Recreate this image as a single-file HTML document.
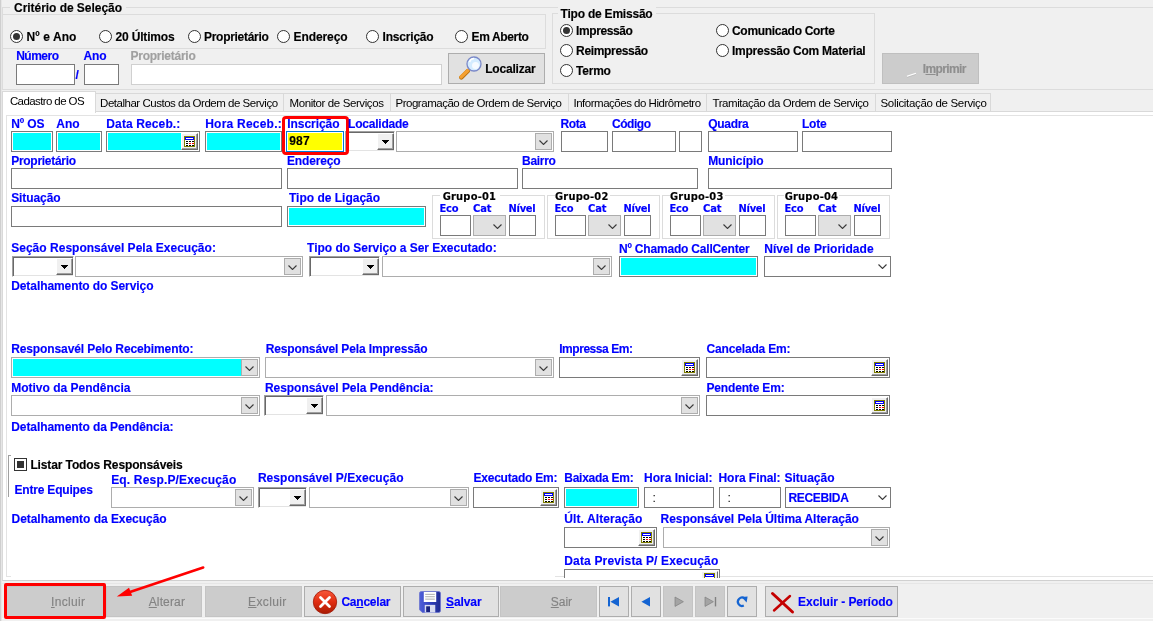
<!DOCTYPE html>
<html><head><meta charset="utf-8"><title>Ordem de Serviço</title>
<style>
html,body{margin:0;padding:0}
body{width:1153px;height:621px;overflow:hidden;background:#f0f0f0;position:relative;font-family:"Liberation Sans",sans-serif}
div,span{position:absolute;box-sizing:border-box}
span{white-space:pre}
#t{left:0;top:0;width:1153px;height:621px;will-change:transform}
#t .b{-webkit-text-stroke:0.15px currentColor}
u{text-decoration:underline}
</style></head><body>
<div style="left:2px;top:7px;width:1158px;height:83px;border:1px solid #dcdcdc;box-sizing:border-box;"></div>
<div style="left:10px;top:0px;width:116px;height:16px;background:#f0f0f0;"></div>
<div style="left:3px;top:14px;width:543px;height:35px;border:1px solid #dcdcdc;border-left:none;box-sizing:border-box;"></div>
<div style="left:10.0px;top:30.0px;width:13.0px;height:13.0px;box-sizing:border-box;border:1px solid #333;border-radius:50%;background:#fff;"><div style="left:2px;top:2px;width:7px;height:7px;border-radius:50%;background:#333"></div></div>
<div style="left:99.0px;top:30.0px;width:13.0px;height:13.0px;box-sizing:border-box;border:1px solid #333;border-radius:50%;background:#fff;"></div>
<div style="left:188.0px;top:30.0px;width:13.0px;height:13.0px;box-sizing:border-box;border:1px solid #333;border-radius:50%;background:#fff;"></div>
<div style="left:277.0px;top:30.0px;width:13.0px;height:13.0px;box-sizing:border-box;border:1px solid #333;border-radius:50%;background:#fff;"></div>
<div style="left:366.0px;top:30.0px;width:13.0px;height:13.0px;box-sizing:border-box;border:1px solid #333;border-radius:50%;background:#fff;"></div>
<div style="left:455.0px;top:30.0px;width:13.0px;height:13.0px;box-sizing:border-box;border:1px solid #333;border-radius:50%;background:#fff;"></div>
<div style="left:16px;top:64px;width:59px;height:21px;border:1px solid #7a7a7a;background:#fff;box-shadow:inset 0 0 0 1px #fff;"></div>
<div style="left:84px;top:64px;width:35px;height:21px;border:1px solid #7a7a7a;background:#fff;box-shadow:inset 0 0 0 1px #fff;"></div>
<div style="left:131px;top:64px;width:311px;height:21px;border:1px solid #d0d0d0;background:#fff;box-sizing:border-box;"></div>
<div style="left:448px;top:53px;width:97px;height:31px;border:1px solid #adadad;background:#e1e1e1;box-sizing:border-box;"><svg width="26" height="28" viewBox="0 0 26 28" style="position:absolute;left:9.5px;top:0px"><path d="M2.3 23.5 L8.8 17" stroke="#b87010" stroke-width="4.4" stroke-linecap="round"/><path d="M2 23 L8.8 16.5" stroke="#f4a030" stroke-width="3.2" stroke-linecap="round"/><circle cx="15" cy="10" r="7" fill="#d4ecff" stroke="#7a88c8" stroke-width="1.3"/><circle cx="16.5" cy="11.5" r="3.5" fill="#fff" opacity="0.8"/><path d="M10.5 8 A5 5 0 0 1 15 4.5" stroke="#fff" stroke-width="1.5" fill="none"/></svg></div>
<div style="left:552px;top:13px;width:323px;height:71px;border:1px solid #dcdcdc;box-sizing:border-box;"></div>
<div style="left:558px;top:5px;width:98px;height:15px;background:#f0f0f0;"></div>
<div style="left:560.0px;top:24.0px;width:13.0px;height:13.0px;box-sizing:border-box;border:1px solid #333;border-radius:50%;background:#fff;"><div style="left:2px;top:2px;width:7px;height:7px;border-radius:50%;background:#333"></div></div>
<div style="left:560.0px;top:44.0px;width:13.0px;height:13.0px;box-sizing:border-box;border:1px solid #333;border-radius:50%;background:#fff;"></div>
<div style="left:560.0px;top:64.0px;width:13.0px;height:13.0px;box-sizing:border-box;border:1px solid #333;border-radius:50%;background:#fff;"></div>
<div style="left:716.0px;top:24.0px;width:13.0px;height:13.0px;box-sizing:border-box;border:1px solid #333;border-radius:50%;background:#fff;"></div>
<div style="left:716.0px;top:44.0px;width:13.0px;height:13.0px;box-sizing:border-box;border:1px solid #333;border-radius:50%;background:#fff;"></div>
<div style="left:882px;top:53px;width:97px;height:31px;background:#cccccc;border:1px solid #bfbfbf;box-sizing:border-box;"></div>
<svg width="12" height="6" viewBox="0 0 12 6" style="position:absolute;left:906px;top:72px"><path d="M1 4.5L10 1.5" stroke="#fff" stroke-width="1.4"/><path d="M1 5.3L10 2.3" stroke="#a8a8a8" stroke-width="0.6"/></svg>
<div style="left:2px;top:111px;width:1151px;height:470px;background:#fff;border:1px solid #d9d9d9;border-right:none;border-bottom-color:#d0d0d0;box-sizing:border-box;"></div>
<div style="left:6px;top:115px;width:1147px;height:462px;border:1px solid #e3e3e3;border-right:none;box-sizing:border-box;"></div>
<div style="left:11px;top:575px;width:544px;height:3px;background:#fff;"></div>
<div style="left:95px;top:93px;width:189px;height:18px;border:1px solid #d9d9d9;border-bottom:none;background:#f0f0f0;box-sizing:border-box;"></div>
<div style="left:283px;top:93px;width:108px;height:18px;border:1px solid #d9d9d9;border-bottom:none;background:#f0f0f0;box-sizing:border-box;"></div>
<div style="left:390px;top:93px;width:179px;height:18px;border:1px solid #d9d9d9;border-bottom:none;background:#f0f0f0;box-sizing:border-box;"></div>
<div style="left:568px;top:93px;width:139px;height:18px;border:1px solid #d9d9d9;border-bottom:none;background:#f0f0f0;box-sizing:border-box;"></div>
<div style="left:706px;top:93px;width:170px;height:18px;border:1px solid #d9d9d9;border-bottom:none;background:#f0f0f0;box-sizing:border-box;"></div>
<div style="left:875px;top:93px;width:116px;height:18px;border:1px solid #d9d9d9;border-bottom:none;background:#f0f0f0;box-sizing:border-box;"></div>
<div style="left:2px;top:91px;width:94px;height:22px;border:1px solid #d9d9d9;border-bottom:none;background:#fff;box-sizing:border-box;"></div>
<div style="left:11px;top:131px;width:42px;height:21px;border:1px solid #7a7a7a;background:#00ffff;box-shadow:inset 0 0 0 1px #fff;"></div>
<div style="left:56px;top:131px;width:46px;height:21px;border:1px solid #7a7a7a;background:#00ffff;box-shadow:inset 0 0 0 1px #fff;"></div>
<div style="left:106px;top:131px;width:94px;height:21px;border:1px solid #7a7a7a;background:#00ffff;box-shadow:inset 0 0 0 1px #fff;"><div style="right:1px;top:1px;width:17px;height:17px;border:1px solid;border-color:#fff #696969 #696969 #fff;background:#f0f0f0;box-shadow:inset -1px -1px 0 #a0a0a0"><svg width="11" height="11" viewBox="0 0 11 11" shape-rendering="crispEdges" style="position:absolute;left:2px;top:2px"><rect x="0" y="0" width="11" height="11" fill="#808000"/><rect x="1" y="1" width="9" height="9" fill="#fff"/><rect x="1" y="1" width="9" height="3" fill="#0000ff"/><rect x="2" y="2" width="7" height="1" fill="#fff"/><rect x="2" y="5" width="2" height="1" fill="#000"/><rect x="5" y="5" width="2" height="1" fill="#000"/><rect x="8" y="5" width="2" height="1" fill="#000"/><rect x="2" y="7" width="2" height="1" fill="#000"/><rect x="5" y="7" width="2" height="1" fill="#f00"/><rect x="8" y="7" width="2" height="1" fill="#f00"/><rect x="2" y="9" width="2" height="1" fill="#000"/><rect x="5" y="9" width="2" height="1" fill="#000"/><rect x="8" y="9" width="2" height="1" fill="#000"/></svg></div></div>
<div style="left:205px;top:131px;width:77px;height:21px;border:1px solid #7a7a7a;background:#00ffff;box-shadow:inset 0 0 0 1px #fff;"></div>
<div style="left:286px;top:131px;width:58px;height:21px;border:1px solid #0078d7;background:#ffff00;box-sizing:border-box;box-shadow:inset 0 0 0 1px #fff;"></div>
<div style="left:345px;top:131px;width:50px;height:21px;border:1px solid;border-color:#a0a0a0 #fff #fff #a0a0a0;background:#fff;box-shadow:inset 1px 1px 0 #696969,inset -1px -1px 0 #e3e3e3;"><div style="right:0px;top:1px;width:17px;height:17px;background:#f0f0f0;border:1px solid;border-color:#fff #696969 #696969 #fff;box-shadow:inset -1px -1px 0 #a0a0a0"><svg width="7" height="4" viewBox="0 0 7 4" shape-rendering="crispEdges" style="position:absolute;left:4px;top:6px"><path d="M0 0H7V1H0ZM1 1H6V2H1ZM2 2H5V3H2ZM3 3H4V4H3Z" fill="#000"/></svg></div></div>
<div style="left:396px;top:131px;width:158px;height:21px;border:1px solid #adadad;background:#fff;"><div style="right:1px;top:1px;width:17px;height:17px;border:1px solid #adadad;background:#e1e1e1"></div><svg width="9" height="5" viewBox="0 0 9 5" style="position:absolute;left:142px;top:8px"><path d="M0.5 0.5 L4.5 4.5 L8.5 0.5" fill="none" stroke="#3a3a3a" stroke-width="1.1"/></svg></div>
<div style="left:561px;top:131px;width:47px;height:21px;border:1px solid #7a7a7a;background:#fff;box-shadow:inset 0 0 0 1px #fff;"></div>
<div style="left:612px;top:131px;width:64px;height:21px;border:1px solid #7a7a7a;background:#fff;box-shadow:inset 0 0 0 1px #fff;"></div>
<div style="left:679px;top:131px;width:23px;height:21px;border:1px solid #7a7a7a;background:#fff;box-shadow:inset 0 0 0 1px #fff;"></div>
<div style="left:708px;top:131px;width:90px;height:21px;border:1px solid #7a7a7a;background:#fff;box-shadow:inset 0 0 0 1px #fff;"></div>
<div style="left:802px;top:131px;width:90px;height:21px;border:1px solid #7a7a7a;background:#fff;box-shadow:inset 0 0 0 1px #fff;"></div>
<div style="left:282px;top:116px;width:67px;height:39px;border:3px solid #ff0000;border-radius:4px;box-sizing:border-box;"></div>
<div style="left:11px;top:168px;width:271px;height:21px;border:1px solid #7a7a7a;background:#fff;box-shadow:inset 0 0 0 1px #fff;"></div>
<div style="left:287px;top:168px;width:231px;height:21px;border:1px solid #7a7a7a;background:#fff;box-shadow:inset 0 0 0 1px #fff;"></div>
<div style="left:522px;top:168px;width:176px;height:21px;border:1px solid #7a7a7a;background:#fff;box-shadow:inset 0 0 0 1px #fff;"></div>
<div style="left:708px;top:168px;width:184px;height:21px;border:1px solid #7a7a7a;background:#fff;box-shadow:inset 0 0 0 1px #fff;"></div>
<div style="left:11px;top:206px;width:271px;height:21px;border:1px solid #7a7a7a;background:#fff;box-shadow:inset 0 0 0 1px #fff;"></div>
<div style="left:287px;top:206px;width:139px;height:21px;border:1px solid #7a7a7a;background:#00ffff;box-shadow:inset 0 0 0 1px #fff;"></div>
<div style="left:432px;top:195px;width:113px;height:44px;border:1px solid #dcdcdc;box-sizing:border-box;"></div>
<div style="left:439.7px;top:190px;width:60.0px;height:13px;background:#fff;"></div>
<div style="left:440px;top:215px;width:31px;height:21px;border:1px solid #7a7a7a;background:#fff;box-sizing:border-box;"></div>
<div style="left:473px;top:215px;width:33px;height:21px;border:1px solid #adadad;background:#e1e1e1;box-sizing:border-box;"><svg width="9" height="5" viewBox="0 0 9 5" style="position:absolute;left:19px;top:7.5px"><path d="M0.5 0.5 L4.5 4.5 L8.5 0.5" fill="none" stroke="#3a3a3a" stroke-width="1.1"/></svg></div>
<div style="left:509px;top:215px;width:27px;height:21px;border:1px solid #7a7a7a;background:#fff;box-sizing:border-box;"></div>
<div style="left:547px;top:195px;width:113px;height:44px;border:1px solid #dcdcdc;box-sizing:border-box;"></div>
<div style="left:554.5px;top:190px;width:55.0px;height:13px;background:#fff;"></div>
<div style="left:555px;top:215px;width:31px;height:21px;border:1px solid #7a7a7a;background:#fff;box-sizing:border-box;"></div>
<div style="left:588px;top:215px;width:33px;height:21px;border:1px solid #adadad;background:#e1e1e1;box-sizing:border-box;"><svg width="9" height="5" viewBox="0 0 9 5" style="position:absolute;left:19px;top:7.5px"><path d="M0.5 0.5 L4.5 4.5 L8.5 0.5" fill="none" stroke="#3a3a3a" stroke-width="1.1"/></svg></div>
<div style="left:624px;top:215px;width:27px;height:21px;border:1px solid #7a7a7a;background:#fff;box-sizing:border-box;"></div>
<div style="left:662px;top:195px;width:113px;height:44px;border:1px solid #dcdcdc;box-sizing:border-box;"></div>
<div style="left:669.5px;top:190px;width:55.0px;height:13px;background:#fff;"></div>
<div style="left:670px;top:215px;width:31px;height:21px;border:1px solid #7a7a7a;background:#fff;box-sizing:border-box;"></div>
<div style="left:703px;top:215px;width:33px;height:21px;border:1px solid #adadad;background:#e1e1e1;box-sizing:border-box;"><svg width="9" height="5" viewBox="0 0 9 5" style="position:absolute;left:19px;top:7.5px"><path d="M0.5 0.5 L4.5 4.5 L8.5 0.5" fill="none" stroke="#3a3a3a" stroke-width="1.1"/></svg></div>
<div style="left:739px;top:215px;width:27px;height:21px;border:1px solid #7a7a7a;background:#fff;box-sizing:border-box;"></div>
<div style="left:777px;top:195px;width:113px;height:44px;border:1px solid #dcdcdc;box-sizing:border-box;"></div>
<div style="left:784.2px;top:190px;width:55.0px;height:13px;background:#fff;"></div>
<div style="left:785px;top:215px;width:31px;height:21px;border:1px solid #7a7a7a;background:#fff;box-sizing:border-box;"></div>
<div style="left:818px;top:215px;width:33px;height:21px;border:1px solid #adadad;background:#e1e1e1;box-sizing:border-box;"><svg width="9" height="5" viewBox="0 0 9 5" style="position:absolute;left:19px;top:7.5px"><path d="M0.5 0.5 L4.5 4.5 L8.5 0.5" fill="none" stroke="#3a3a3a" stroke-width="1.1"/></svg></div>
<div style="left:854px;top:215px;width:27px;height:21px;border:1px solid #7a7a7a;background:#fff;box-sizing:border-box;"></div>
<div style="left:12px;top:256px;width:62px;height:21px;border:1px solid;border-color:#a0a0a0 #fff #fff #a0a0a0;background:#fff;box-shadow:inset 1px 1px 0 #696969,inset -1px -1px 0 #e3e3e3;"><div style="right:0px;top:1px;width:17px;height:17px;background:#f0f0f0;border:1px solid;border-color:#fff #696969 #696969 #fff;box-shadow:inset -1px -1px 0 #a0a0a0"><svg width="7" height="4" viewBox="0 0 7 4" shape-rendering="crispEdges" style="position:absolute;left:4px;top:6px"><path d="M0 0H7V1H0ZM1 1H6V2H1ZM2 2H5V3H2ZM3 3H4V4H3Z" fill="#000"/></svg></div></div>
<div style="left:75px;top:256px;width:228px;height:21px;border:1px solid #adadad;background:#fff;"><div style="right:1px;top:1px;width:17px;height:17px;border:1px solid #adadad;background:#e1e1e1"></div><svg width="9" height="5" viewBox="0 0 9 5" style="position:absolute;left:212px;top:8px"><path d="M0.5 0.5 L4.5 4.5 L8.5 0.5" fill="none" stroke="#3a3a3a" stroke-width="1.1"/></svg></div>
<div style="left:309px;top:256px;width:71px;height:21px;border:1px solid;border-color:#a0a0a0 #fff #fff #a0a0a0;background:#fff;box-shadow:inset 1px 1px 0 #696969,inset -1px -1px 0 #e3e3e3;"><div style="right:0px;top:1px;width:17px;height:17px;background:#f0f0f0;border:1px solid;border-color:#fff #696969 #696969 #fff;box-shadow:inset -1px -1px 0 #a0a0a0"><svg width="7" height="4" viewBox="0 0 7 4" shape-rendering="crispEdges" style="position:absolute;left:4px;top:6px"><path d="M0 0H7V1H0ZM1 1H6V2H1ZM2 2H5V3H2ZM3 3H4V4H3Z" fill="#000"/></svg></div></div>
<div style="left:382px;top:256px;width:230px;height:21px;border:1px solid #adadad;background:#fff;"><div style="right:1px;top:1px;width:17px;height:17px;border:1px solid #adadad;background:#e1e1e1"></div><svg width="9" height="5" viewBox="0 0 9 5" style="position:absolute;left:214px;top:8px"><path d="M0.5 0.5 L4.5 4.5 L8.5 0.5" fill="none" stroke="#3a3a3a" stroke-width="1.1"/></svg></div>
<div style="left:619px;top:256px;width:139px;height:21px;border:1px solid #7a7a7a;background:#00ffff;box-shadow:inset 0 0 0 1px #fff;"></div>
<div style="left:764px;top:256px;width:127px;height:21px;border:1px solid #7a7a7a;background:#fff;"><svg width="9" height="5" viewBox="0 0 9 5" style="position:absolute;left:112.5px;top:7px"><path d="M0.5 0.5 L4.5 4.5 L8.5 0.5" fill="none" stroke="#3a3a3a" stroke-width="1.1"/></svg></div>
<div style="left:11px;top:357px;width:249px;height:21px;border:1px solid #adadad;background:#00ffff;box-shadow:inset 0 0 0 1px #fff;"><div style="right:0;top:0;width:18px;height:19px;background:#fff"></div><div style="right:1px;top:1px;width:17px;height:17px;border:1px solid #adadad;background:#e1e1e1"></div><svg width="9" height="5" viewBox="0 0 9 5" style="position:absolute;left:233px;top:8px"><path d="M0.5 0.5 L4.5 4.5 L8.5 0.5" fill="none" stroke="#3a3a3a" stroke-width="1.1"/></svg></div>
<div style="left:265px;top:357px;width:289px;height:21px;border:1px solid #adadad;background:#fff;"><div style="right:1px;top:1px;width:17px;height:17px;border:1px solid #adadad;background:#e1e1e1"></div><svg width="9" height="5" viewBox="0 0 9 5" style="position:absolute;left:273px;top:8px"><path d="M0.5 0.5 L4.5 4.5 L8.5 0.5" fill="none" stroke="#3a3a3a" stroke-width="1.1"/></svg></div>
<div style="left:559px;top:357px;width:141px;height:21px;border:1px solid #7a7a7a;background:#fff;box-shadow:inset 0 0 0 1px #fff;"><div style="right:1px;top:1px;width:17px;height:17px;border:1px solid;border-color:#fff #696969 #696969 #fff;background:#f0f0f0;box-shadow:inset -1px -1px 0 #a0a0a0"><svg width="11" height="11" viewBox="0 0 11 11" shape-rendering="crispEdges" style="position:absolute;left:2px;top:2px"><rect x="0" y="0" width="11" height="11" fill="#808000"/><rect x="1" y="1" width="9" height="9" fill="#fff"/><rect x="1" y="1" width="9" height="3" fill="#0000ff"/><rect x="2" y="2" width="7" height="1" fill="#fff"/><rect x="2" y="5" width="2" height="1" fill="#000"/><rect x="5" y="5" width="2" height="1" fill="#000"/><rect x="8" y="5" width="2" height="1" fill="#000"/><rect x="2" y="7" width="2" height="1" fill="#000"/><rect x="5" y="7" width="2" height="1" fill="#f00"/><rect x="8" y="7" width="2" height="1" fill="#f00"/><rect x="2" y="9" width="2" height="1" fill="#000"/><rect x="5" y="9" width="2" height="1" fill="#000"/><rect x="8" y="9" width="2" height="1" fill="#000"/></svg></div></div>
<div style="left:706px;top:357px;width:184px;height:21px;border:1px solid #7a7a7a;background:#fff;box-shadow:inset 0 0 0 1px #fff;"><div style="right:1px;top:1px;width:17px;height:17px;border:1px solid;border-color:#fff #696969 #696969 #fff;background:#f0f0f0;box-shadow:inset -1px -1px 0 #a0a0a0"><svg width="11" height="11" viewBox="0 0 11 11" shape-rendering="crispEdges" style="position:absolute;left:2px;top:2px"><rect x="0" y="0" width="11" height="11" fill="#808000"/><rect x="1" y="1" width="9" height="9" fill="#fff"/><rect x="1" y="1" width="9" height="3" fill="#0000ff"/><rect x="2" y="2" width="7" height="1" fill="#fff"/><rect x="2" y="5" width="2" height="1" fill="#000"/><rect x="5" y="5" width="2" height="1" fill="#000"/><rect x="8" y="5" width="2" height="1" fill="#000"/><rect x="2" y="7" width="2" height="1" fill="#000"/><rect x="5" y="7" width="2" height="1" fill="#f00"/><rect x="8" y="7" width="2" height="1" fill="#f00"/><rect x="2" y="9" width="2" height="1" fill="#000"/><rect x="5" y="9" width="2" height="1" fill="#000"/><rect x="8" y="9" width="2" height="1" fill="#000"/></svg></div></div>
<div style="left:11px;top:395px;width:249px;height:21px;border:1px solid #adadad;background:#fff;"><div style="right:1px;top:1px;width:17px;height:17px;border:1px solid #adadad;background:#e1e1e1"></div><svg width="9" height="5" viewBox="0 0 9 5" style="position:absolute;left:233px;top:8px"><path d="M0.5 0.5 L4.5 4.5 L8.5 0.5" fill="none" stroke="#3a3a3a" stroke-width="1.1"/></svg></div>
<div style="left:264px;top:395px;width:60px;height:21px;border:1px solid;border-color:#a0a0a0 #fff #fff #a0a0a0;background:#fff;box-shadow:inset 1px 1px 0 #696969,inset -1px -1px 0 #e3e3e3;"><div style="right:0px;top:1px;width:17px;height:17px;background:#f0f0f0;border:1px solid;border-color:#fff #696969 #696969 #fff;box-shadow:inset -1px -1px 0 #a0a0a0"><svg width="7" height="4" viewBox="0 0 7 4" shape-rendering="crispEdges" style="position:absolute;left:4px;top:6px"><path d="M0 0H7V1H0ZM1 1H6V2H1ZM2 2H5V3H2ZM3 3H4V4H3Z" fill="#000"/></svg></div></div>
<div style="left:326px;top:395px;width:374px;height:21px;border:1px solid #adadad;background:#fff;"><div style="right:1px;top:1px;width:17px;height:17px;border:1px solid #adadad;background:#e1e1e1"></div><svg width="9" height="5" viewBox="0 0 9 5" style="position:absolute;left:358px;top:8px"><path d="M0.5 0.5 L4.5 4.5 L8.5 0.5" fill="none" stroke="#3a3a3a" stroke-width="1.1"/></svg></div>
<div style="left:706px;top:395px;width:184px;height:21px;border:1px solid #7a7a7a;background:#fff;box-shadow:inset 0 0 0 1px #fff;"><div style="right:1px;top:1px;width:17px;height:17px;border:1px solid;border-color:#fff #696969 #696969 #fff;background:#f0f0f0;box-shadow:inset -1px -1px 0 #a0a0a0"><svg width="11" height="11" viewBox="0 0 11 11" shape-rendering="crispEdges" style="position:absolute;left:2px;top:2px"><rect x="0" y="0" width="11" height="11" fill="#808000"/><rect x="1" y="1" width="9" height="9" fill="#fff"/><rect x="1" y="1" width="9" height="3" fill="#0000ff"/><rect x="2" y="2" width="7" height="1" fill="#fff"/><rect x="2" y="5" width="2" height="1" fill="#000"/><rect x="5" y="5" width="2" height="1" fill="#000"/><rect x="8" y="5" width="2" height="1" fill="#000"/><rect x="2" y="7" width="2" height="1" fill="#000"/><rect x="5" y="7" width="2" height="1" fill="#f00"/><rect x="8" y="7" width="2" height="1" fill="#f00"/><rect x="2" y="9" width="2" height="1" fill="#000"/><rect x="5" y="9" width="2" height="1" fill="#000"/><rect x="8" y="9" width="2" height="1" fill="#000"/></svg></div></div>
<div style="left:8px;top:455px;width:3px;height:42px;border:1px solid #a0a0a0;border-right:none;border-bottom:none;"></div>
<div style="left:14px;top:458px;width:13px;height:13px;border:1px solid #333;background:#fff;box-sizing:border-box;"><div style="left:2px;top:2px;width:7px;height:7px;background:#333"></div></div>
<div style="left:111px;top:487px;width:143px;height:21px;border:1px solid #adadad;background:#fff;"><div style="right:1px;top:1px;width:17px;height:17px;border:1px solid #adadad;background:#e1e1e1"></div><svg width="9" height="5" viewBox="0 0 9 5" style="position:absolute;left:127px;top:8px"><path d="M0.5 0.5 L4.5 4.5 L8.5 0.5" fill="none" stroke="#3a3a3a" stroke-width="1.1"/></svg></div>
<div style="left:258px;top:487px;width:49px;height:21px;border:1px solid;border-color:#a0a0a0 #fff #fff #a0a0a0;background:#fff;box-shadow:inset 1px 1px 0 #696969,inset -1px -1px 0 #e3e3e3;"><div style="right:0px;top:1px;width:17px;height:17px;background:#f0f0f0;border:1px solid;border-color:#fff #696969 #696969 #fff;box-shadow:inset -1px -1px 0 #a0a0a0"><svg width="7" height="4" viewBox="0 0 7 4" shape-rendering="crispEdges" style="position:absolute;left:4px;top:6px"><path d="M0 0H7V1H0ZM1 1H6V2H1ZM2 2H5V3H2ZM3 3H4V4H3Z" fill="#000"/></svg></div></div>
<div style="left:309px;top:487px;width:160px;height:21px;border:1px solid #adadad;background:#fff;"><div style="right:1px;top:1px;width:17px;height:17px;border:1px solid #adadad;background:#e1e1e1"></div><svg width="9" height="5" viewBox="0 0 9 5" style="position:absolute;left:144px;top:8px"><path d="M0.5 0.5 L4.5 4.5 L8.5 0.5" fill="none" stroke="#3a3a3a" stroke-width="1.1"/></svg></div>
<div style="left:473px;top:487px;width:86px;height:21px;border:1px solid #7a7a7a;background:#fff;box-shadow:inset 0 0 0 1px #fff;"><div style="right:1px;top:1px;width:17px;height:17px;border:1px solid;border-color:#fff #696969 #696969 #fff;background:#f0f0f0;box-shadow:inset -1px -1px 0 #a0a0a0"><svg width="11" height="11" viewBox="0 0 11 11" shape-rendering="crispEdges" style="position:absolute;left:2px;top:2px"><rect x="0" y="0" width="11" height="11" fill="#808000"/><rect x="1" y="1" width="9" height="9" fill="#fff"/><rect x="1" y="1" width="9" height="3" fill="#0000ff"/><rect x="2" y="2" width="7" height="1" fill="#fff"/><rect x="2" y="5" width="2" height="1" fill="#000"/><rect x="5" y="5" width="2" height="1" fill="#000"/><rect x="8" y="5" width="2" height="1" fill="#000"/><rect x="2" y="7" width="2" height="1" fill="#000"/><rect x="5" y="7" width="2" height="1" fill="#f00"/><rect x="8" y="7" width="2" height="1" fill="#f00"/><rect x="2" y="9" width="2" height="1" fill="#000"/><rect x="5" y="9" width="2" height="1" fill="#000"/><rect x="8" y="9" width="2" height="1" fill="#000"/></svg></div></div>
<div style="left:564px;top:487px;width:75px;height:21px;border:1px solid #7a7a7a;background:#00ffff;box-shadow:inset 0 0 0 1px #fff;"></div>
<div style="left:644px;top:487px;width:70px;height:21px;border:1px solid #7a7a7a;background:#fff;box-shadow:inset 0 0 0 1px #fff;"></div>
<div style="left:719px;top:487px;width:62px;height:21px;border:1px solid #7a7a7a;background:#fff;box-shadow:inset 0 0 0 1px #fff;"></div>
<div style="left:785px;top:487px;width:106px;height:21px;border:1px solid #7a7a7a;background:#fff;"><svg width="9" height="5" viewBox="0 0 9 5" style="position:absolute;left:91.5px;top:7px"><path d="M0.5 0.5 L4.5 4.5 L8.5 0.5" fill="none" stroke="#3a3a3a" stroke-width="1.1"/></svg></div>
<div style="left:564px;top:527px;width:93px;height:21px;border:1px solid #7a7a7a;background:#fff;box-shadow:inset 0 0 0 1px #fff;"><div style="right:1px;top:1px;width:17px;height:17px;border:1px solid;border-color:#fff #696969 #696969 #fff;background:#f0f0f0;box-shadow:inset -1px -1px 0 #a0a0a0"><svg width="11" height="11" viewBox="0 0 11 11" shape-rendering="crispEdges" style="position:absolute;left:2px;top:2px"><rect x="0" y="0" width="11" height="11" fill="#808000"/><rect x="1" y="1" width="9" height="9" fill="#fff"/><rect x="1" y="1" width="9" height="3" fill="#0000ff"/><rect x="2" y="2" width="7" height="1" fill="#fff"/><rect x="2" y="5" width="2" height="1" fill="#000"/><rect x="5" y="5" width="2" height="1" fill="#000"/><rect x="8" y="5" width="2" height="1" fill="#000"/><rect x="2" y="7" width="2" height="1" fill="#000"/><rect x="5" y="7" width="2" height="1" fill="#f00"/><rect x="8" y="7" width="2" height="1" fill="#f00"/><rect x="2" y="9" width="2" height="1" fill="#000"/><rect x="5" y="9" width="2" height="1" fill="#000"/><rect x="8" y="9" width="2" height="1" fill="#000"/></svg></div></div>
<div style="left:663px;top:527px;width:227px;height:21px;border:1px solid #adadad;background:#fff;"><div style="right:1px;top:1px;width:17px;height:17px;border:1px solid #adadad;background:#e1e1e1"></div><svg width="9" height="5" viewBox="0 0 9 5" style="position:absolute;left:211px;top:8px"><path d="M0.5 0.5 L4.5 4.5 L8.5 0.5" fill="none" stroke="#3a3a3a" stroke-width="1.1"/></svg></div>
<div style="left:564px;top:569px;width:156px;height:9px;border:1px solid #7a7a7a;border-bottom:none;background:#fff;box-sizing:border-box;overflow:hidden"><div style="right:1px;top:1px;width:17px;height:17px;border:1px solid;border-color:#fff #696969 #696969 #fff;background:#f0f0f0"><svg width="11" height="11" viewBox="0 0 11 11" shape-rendering="crispEdges" style="position:absolute;left:2px;top:1px"><rect x="0" y="0" width="11" height="11" fill="#808000"/><rect x="1" y="1" width="9" height="9" fill="#fff"/><rect x="1" y="1" width="9" height="3" fill="#0000ff"/><rect x="2" y="2" width="7" height="1" fill="#fff"/><rect x="2" y="5" width="2" height="1" fill="#000"/><rect x="5" y="5" width="2" height="1" fill="#000"/><rect x="8" y="5" width="2" height="1" fill="#000"/><rect x="2" y="7" width="2" height="1" fill="#000"/><rect x="5" y="7" width="2" height="1" fill="#f00"/><rect x="8" y="7" width="2" height="1" fill="#f00"/><rect x="2" y="9" width="2" height="1" fill="#000"/><rect x="5" y="9" width="2" height="1" fill="#000"/><rect x="8" y="9" width="2" height="1" fill="#000"/></svg></div></div>
<div style="left:0px;top:581px;width:1153px;height:40px;background:#f0f0f0;"></div>
<div style="left:2px;top:583px;width:1151px;height:1px;background:#e6e6e6;"></div>
<div style="left:2px;top:618px;width:1151px;height:1px;background:#fbfbfb;"></div>
<div style="left:6px;top:586px;width:99px;height:31px;background:#cccccc;border:1px solid #c4c4c4;box-sizing:border-box;"></div>
<div style="left:106px;top:586px;width:96px;height:31px;background:#cccccc;border:1px solid #c4c4c4;box-sizing:border-box;"></div>
<div style="left:205px;top:586px;width:97px;height:31px;background:#cccccc;border:1px solid #c4c4c4;box-sizing:border-box;"></div>
<div style="left:304px;top:586px;width:97px;height:31px;background:#e1e1e1;border:1px solid #adadad;box-sizing:border-box;"><svg width="26" height="26" viewBox="0 0 26 26" style="position:absolute;left:7px;top:2px"><defs><linearGradient id="rg" x1="0" y1="0" x2="0" y2="1"><stop offset="0" stop-color="#f8583a"/><stop offset="0.5" stop-color="#e02c10"/><stop offset="1" stop-color="#a81c04"/></linearGradient></defs><circle cx="13" cy="13" r="11.7" fill="url(#rg)" stroke="#a01808" stroke-width="0.8"/><path d="M8.5 8.5L17.5 17.5M17.5 8.5L8.5 17.5" stroke="#fff" stroke-width="2.8" stroke-linecap="round"/></svg></div>
<div style="left:403px;top:586px;width:96px;height:31px;background:#e1e1e1;border:1px solid #adadad;box-sizing:border-box;"><svg width="22" height="22" viewBox="0 0 23 23" style="position:absolute;left:14.5px;top:4px"><defs><linearGradient id="fg" x1="0" y1="0" x2="1" y2="0"><stop offset="0" stop-color="#5060d8"/><stop offset="0.5" stop-color="#3040c0"/><stop offset="1" stop-color="#202c90"/></linearGradient></defs><path d="M2.5 0.5H20.5Q22.5 0.5 22.5 2.5V20.5Q22.5 22.5 20.5 22.5H3.5L0.5 19.5V2.5Q0.5 0.5 2.5 0.5Z" fill="url(#fg)" stroke="#6a74d0" stroke-width="0.8"/><rect x="5" y="1" width="13" height="10.5" fill="#fff"/><path d="M6.5 3.5H16.5M6.5 6H16.5M6.5 8.5H16.5" stroke="#a8a8a8" stroke-width="1"/><rect x="6" y="14.5" width="11" height="8" fill="#d8dcf0"/><rect x="7.5" y="16" width="4" height="6" fill="#1a2480"/></svg></div>
<div style="left:500px;top:586px;width:97px;height:31px;background:#cccccc;border:1px solid #c4c4c4;box-sizing:border-box;"></div>
<div style="left:599px;top:586px;width:30px;height:31px;background:#e1e1e1;border:1px solid #adadad;box-sizing:border-box;"><svg width="30" height="31" viewBox="0 0 30 31" style="position:absolute;left:-1px;top:-1px"><rect x="9" y="11" width="2" height="9.4" fill="#1464d2"/><path d="M20 11V20.4L11.4 15.7Z" fill="#1464d2"/></svg></div>
<div style="left:631px;top:586px;width:30px;height:31px;background:#e1e1e1;border:1px solid #adadad;box-sizing:border-box;"><svg width="30" height="31" viewBox="0 0 30 31" style="position:absolute;left:-1px;top:-1px"><path d="M19 11V20.4L10.4 15.7Z" fill="#1464d2"/></svg></div>
<div style="left:663px;top:586px;width:30px;height:31px;background:#cccccc;border:1px solid #c4c4c4;box-sizing:border-box;"><svg width="30" height="31" viewBox="0 0 30 31" style="position:absolute;left:-1px;top:-1px"><path d="M12 11V20.4L20.4 15.7Z" fill="#a4a4a4" stroke="#808080" stroke-width="0.7"/></svg></div>
<div style="left:695px;top:586px;width:30px;height:31px;background:#cccccc;border:1px solid #c4c4c4;box-sizing:border-box;"><svg width="30" height="31" viewBox="0 0 30 31" style="position:absolute;left:-1px;top:-1px"><rect x="19.8" y="11" width="1.4" height="9.4" fill="#808080"/><path d="M10 11V20.4L18.4 15.7Z" fill="#a4a4a4" stroke="#808080" stroke-width="0.7"/></svg></div>
<div style="left:727px;top:586px;width:30px;height:31px;background:#e1e1e1;border:1px solid #adadad;box-sizing:border-box;"><svg width="30" height="31" viewBox="0 0 30 31" style="position:absolute;left:-1px;top:-1px"><path d="M16.8 19.6A4.2 4.2 0 1 1 17.6 12.4" fill="none" stroke="#1464d2" stroke-width="2.2"/><path d="M14.6 11L20.6 10.6L19.6 16.6Z" fill="#1464d2"/></svg></div>
<div style="left:765px;top:586px;width:133px;height:31px;background:#e1e1e1;border:1px solid #adadad;box-sizing:border-box;"><svg width="26" height="24" viewBox="0 0 26 24" style="position:absolute;left:4px;top:4px"><path d="M2.5 2.5L22.5 21" stroke="#c40000" stroke-width="3" stroke-linecap="round"/><path d="M20 5L4 19.5" stroke="#c40000" stroke-width="2.4" stroke-linecap="round"/></svg></div>
<div style="left:4px;top:583px;width:102px;height:36px;border:3px solid #ff0000;border-radius:2px;box-sizing:border-box;"></div>
<svg width="100" height="40" viewBox="0 0 100 40" style="position:absolute;left:110px;top:560px"><path d="M93.2 7.5L20 32" stroke="#ff0000" stroke-width="2.6" stroke-linecap="round" fill="none"/><path d="M6.8 36.6L19 27.8L22.2 35.7Z" fill="#ff0000"/></svg>
<div style="left:0px;top:0px;width:1px;height:621px;background:#cfcfcf;"></div>
<div style="left:1px;top:0px;width:1px;height:621px;background:#e6e6e6;"></div>
<div id="t">
<span class="b" style="left:14.0px;top:0.0px;font:bold 12px 'Liberation Sans',sans-serif;line-height:16px;color:#000;letter-spacing:-0.04px">Critério de Seleção</span>
<span class="b" style="left:26.5px;top:29.0px;font:bold 12px 'Liberation Sans',sans-serif;line-height:16px;color:#000;letter-spacing:0.09px">Nº e Ano</span>
<span class="b" style="left:115.5px;top:29.0px;font:bold 12px 'Liberation Sans',sans-serif;line-height:16px;color:#000;letter-spacing:-0.17px">20 Últimos</span>
<span class="b" style="left:204.0px;top:29.0px;font:bold 12px 'Liberation Sans',sans-serif;line-height:16px;color:#000;letter-spacing:-0.29px">Proprietário</span>
<span class="b" style="left:293.5px;top:29.0px;font:bold 12px 'Liberation Sans',sans-serif;line-height:16px;color:#000;letter-spacing:-0.09px">Endereço</span>
<span class="b" style="left:382.5px;top:29.0px;font:bold 12px 'Liberation Sans',sans-serif;line-height:16px;color:#000;letter-spacing:-0.19px">Inscrição</span>
<span class="b" style="left:471.5px;top:29.0px;font:bold 12px 'Liberation Sans',sans-serif;line-height:16px;color:#000;letter-spacing:-0.36px">Em Aberto</span>
<span class="b" style="left:16.2px;top:48.0px;font:bold 12px 'Liberation Sans',sans-serif;line-height:16px;color:#0000ff;letter-spacing:-0.51px">Número</span>
<span class="b" style="left:83.5px;top:48.0px;font:bold 12px 'Liberation Sans',sans-serif;line-height:16px;color:#0000ff;letter-spacing:-0.11px">Ano</span>
<span class="b" style="left:130.5px;top:48.0px;font:bold 12px 'Liberation Sans',sans-serif;line-height:16px;color:#a0a0a0;letter-spacing:-0.25px">Proprietário</span>
<span class="b" style="left:75.5px;top:67.0px;font:bold 12px 'Liberation Sans',sans-serif;line-height:16px;color:#0000ff;letter-spacing:1.20px">/</span>
<span class="b" style="left:485.2px;top:61.0px;font:bold 12px 'Liberation Sans',sans-serif;line-height:16px;color:#000;letter-spacing:-0.19px">Localizar</span>
<span class="b" style="left:560.5px;top:6.0px;font:bold 12px 'Liberation Sans',sans-serif;line-height:16px;color:#000;letter-spacing:-0.21px">Tipo de Emissão</span>
<span class="b" style="left:576.1px;top:22.8px;font:bold 12px 'Liberation Sans',sans-serif;line-height:16px;color:#000;letter-spacing:-0.40px">Impressão</span>
<span class="b" style="left:576.1px;top:42.8px;font:bold 12px 'Liberation Sans',sans-serif;line-height:16px;color:#000;letter-spacing:-0.34px">Reimpressão</span>
<span class="b" style="left:576.1px;top:62.8px;font:bold 12px 'Liberation Sans',sans-serif;line-height:16px;color:#000;letter-spacing:-0.24px">Termo</span>
<span class="b" style="left:732.0px;top:22.8px;font:bold 12px 'Liberation Sans',sans-serif;line-height:16px;color:#000;letter-spacing:-0.30px">Comunicado Corte</span>
<span class="b" style="left:732.0px;top:42.8px;font:bold 12px 'Liberation Sans',sans-serif;line-height:16px;color:#000;letter-spacing:-0.24px">Impressão Com Material</span>
<span class="b" style="left:922.8px;top:61.0px;font:bold 12px 'Liberation Sans',sans-serif;line-height:16px;color:#8e8e8e;letter-spacing:-0.63px">I<u>m</u>primir</span>
<span style="left:100.1px;top:94.7px;font:11.5px 'Liberation Sans',sans-serif;line-height:16px;color:#000;letter-spacing:-0.48px">Detalhar Custos da Ordem de Serviço</span>
<span style="left:289.5px;top:94.7px;font:11.5px 'Liberation Sans',sans-serif;line-height:16px;color:#000;letter-spacing:-0.40px">Monitor de Serviços</span>
<span style="left:395.5px;top:94.7px;font:11.5px 'Liberation Sans',sans-serif;line-height:16px;color:#000;letter-spacing:-0.48px">Programação de Ordem de Serviço</span>
<span style="left:573.5px;top:94.7px;font:11.5px 'Liberation Sans',sans-serif;line-height:16px;color:#000;letter-spacing:-0.49px">Informações do Hidrômetro</span>
<span style="left:712.5px;top:94.7px;font:11.5px 'Liberation Sans',sans-serif;line-height:16px;color:#000;letter-spacing:-0.43px">Tramitação da Ordem de Serviço</span>
<span style="left:880.5px;top:94.7px;font:11.5px 'Liberation Sans',sans-serif;line-height:16px;color:#000;letter-spacing:-0.32px">Solicitação de Serviço</span>
<span style="left:9.9px;top:93.0px;font:11.5px 'Liberation Sans',sans-serif;line-height:16px;color:#000;letter-spacing:-0.60px">Cadastro de OS</span>
<span class="b" style="left:11.2px;top:116.0px;font:bold 12px 'Liberation Sans',sans-serif;line-height:16px;color:#0000ff;letter-spacing:-0.09px">Nº OS</span>
<span class="b" style="left:56.3px;top:116.0px;font:bold 12px 'Liberation Sans',sans-serif;line-height:16px;color:#0000ff;letter-spacing:-0.04px">Ano</span>
<span class="b" style="left:106.3px;top:116.0px;font:bold 12px 'Liberation Sans',sans-serif;line-height:16px;color:#0000ff;letter-spacing:0.12px">Data Receb.:</span>
<span class="b" style="left:205.2px;top:116.0px;font:bold 12px 'Liberation Sans',sans-serif;line-height:16px;color:#0000ff;letter-spacing:0.23px">Hora Receb.:</span>
<span class="b" style="left:287.2px;top:116.0px;font:bold 12px 'Liberation Sans',sans-serif;line-height:16px;color:#0000ff;letter-spacing:-0.04px">Inscrição</span>
<span class="b" style="left:289.2px;top:133.0px;font:bold 12px 'Liberation Sans',sans-serif;line-height:16px;color:#000;letter-spacing:0.19px">987</span>
<span class="b" style="left:348.1px;top:116.0px;font:bold 12px 'Liberation Sans',sans-serif;line-height:16px;color:#0000ff;letter-spacing:-0.23px">Localidade</span>
<span class="b" style="left:560.5px;top:116.0px;font:bold 12px 'Liberation Sans',sans-serif;line-height:16px;color:#0000ff;letter-spacing:-0.42px">Rota</span>
<span class="b" style="left:612.0px;top:116.0px;font:bold 12px 'Liberation Sans',sans-serif;line-height:16px;color:#0000ff;letter-spacing:-0.47px">Código</span>
<span class="b" style="left:708.2px;top:116.0px;font:bold 12px 'Liberation Sans',sans-serif;line-height:16px;color:#0000ff;letter-spacing:-0.29px">Quadra</span>
<span class="b" style="left:802.0px;top:116.0px;font:bold 12px 'Liberation Sans',sans-serif;line-height:16px;color:#0000ff;letter-spacing:-0.21px">Lote</span>
<span class="b" style="left:11.2px;top:153.0px;font:bold 12px 'Liberation Sans',sans-serif;line-height:16px;color:#0000ff;letter-spacing:-0.28px">Proprietário</span>
<span class="b" style="left:287.0px;top:153.0px;font:bold 12px 'Liberation Sans',sans-serif;line-height:16px;color:#0000ff;letter-spacing:-0.15px">Endereço</span>
<span class="b" style="left:522.1px;top:153.0px;font:bold 12px 'Liberation Sans',sans-serif;line-height:16px;color:#0000ff;letter-spacing:-0.32px">Bairro</span>
<span class="b" style="left:708.2px;top:153.0px;font:bold 12px 'Liberation Sans',sans-serif;line-height:16px;color:#0000ff;letter-spacing:-0.08px">Município</span>
<span class="b" style="left:11.2px;top:190.0px;font:bold 12px 'Liberation Sans',sans-serif;line-height:16px;color:#0000ff;letter-spacing:-0.09px">Situação</span>
<span class="b" style="left:289.0px;top:190.0px;font:bold 12px 'Liberation Sans',sans-serif;line-height:16px;color:#0000ff;letter-spacing:0.00px">Tipo de Ligação</span>
<span class="b" style="left:442.7px;top:189.2px;font:bold 11px 'DejaVu Sans Condensed','DejaVu Sans',sans-serif;line-height:16px;color:#000;letter-spacing:0.21px">Grupo-01</span>
<span class="b" style="left:439.5px;top:201.4px;font:bold 11px 'DejaVu Sans Condensed','DejaVu Sans',sans-serif;line-height:16px;color:#0000ff;letter-spacing:-0.15px">Eco</span>
<span class="b" style="left:472.9px;top:201.4px;font:bold 11px 'DejaVu Sans Condensed','DejaVu Sans',sans-serif;line-height:16px;color:#0000ff;letter-spacing:-0.02px">Cat</span>
<span class="b" style="left:508.5px;top:201.4px;font:bold 11px 'DejaVu Sans Condensed','DejaVu Sans',sans-serif;line-height:16px;color:#0000ff;letter-spacing:-0.25px">Nível</span>
<span class="b" style="left:555.0px;top:189.2px;font:bold 11px 'DejaVu Sans Condensed','DejaVu Sans',sans-serif;line-height:16px;color:#000;letter-spacing:0.21px">Grupo-02</span>
<span class="b" style="left:554.5px;top:201.4px;font:bold 11px 'DejaVu Sans Condensed','DejaVu Sans',sans-serif;line-height:16px;color:#0000ff;letter-spacing:-0.15px">Eco</span>
<span class="b" style="left:587.9px;top:201.4px;font:bold 11px 'DejaVu Sans Condensed','DejaVu Sans',sans-serif;line-height:16px;color:#0000ff;letter-spacing:-0.02px">Cat</span>
<span class="b" style="left:623.5px;top:201.4px;font:bold 11px 'DejaVu Sans Condensed','DejaVu Sans',sans-serif;line-height:16px;color:#0000ff;letter-spacing:-0.25px">Nível</span>
<span class="b" style="left:670.0px;top:189.2px;font:bold 11px 'DejaVu Sans Condensed','DejaVu Sans',sans-serif;line-height:16px;color:#000;letter-spacing:0.21px">Grupo-03</span>
<span class="b" style="left:669.5px;top:201.4px;font:bold 11px 'DejaVu Sans Condensed','DejaVu Sans',sans-serif;line-height:16px;color:#0000ff;letter-spacing:-0.15px">Eco</span>
<span class="b" style="left:702.9px;top:201.4px;font:bold 11px 'DejaVu Sans Condensed','DejaVu Sans',sans-serif;line-height:16px;color:#0000ff;letter-spacing:-0.02px">Cat</span>
<span class="b" style="left:738.5px;top:201.4px;font:bold 11px 'DejaVu Sans Condensed','DejaVu Sans',sans-serif;line-height:16px;color:#0000ff;letter-spacing:-0.25px">Nível</span>
<span class="b" style="left:784.7px;top:189.2px;font:bold 11px 'DejaVu Sans Condensed','DejaVu Sans',sans-serif;line-height:16px;color:#000;letter-spacing:0.21px">Grupo-04</span>
<span class="b" style="left:784.5px;top:201.4px;font:bold 11px 'DejaVu Sans Condensed','DejaVu Sans',sans-serif;line-height:16px;color:#0000ff;letter-spacing:-0.15px">Eco</span>
<span class="b" style="left:817.9px;top:201.4px;font:bold 11px 'DejaVu Sans Condensed','DejaVu Sans',sans-serif;line-height:16px;color:#0000ff;letter-spacing:-0.02px">Cat</span>
<span class="b" style="left:853.5px;top:201.4px;font:bold 11px 'DejaVu Sans Condensed','DejaVu Sans',sans-serif;line-height:16px;color:#0000ff;letter-spacing:-0.25px">Nível</span>
<span class="b" style="left:11.2px;top:240.0px;font:bold 12px 'Liberation Sans',sans-serif;line-height:16px;color:#0000ff;letter-spacing:0.02px">Seção Responsável Pela Execução:</span>
<span class="b" style="left:307.1px;top:240.0px;font:bold 12px 'Liberation Sans',sans-serif;line-height:16px;color:#0000ff;letter-spacing:-0.03px">Tipo do Serviço a Ser Executado:</span>
<span class="b" style="left:619.0px;top:241.0px;font:bold 12px 'Liberation Sans',sans-serif;line-height:16px;color:#0000ff;letter-spacing:-0.19px">Nº Chamado CallCenter</span>
<span class="b" style="left:764.2px;top:241.0px;font:bold 12px 'Liberation Sans',sans-serif;line-height:16px;color:#0000ff;letter-spacing:0.04px">Nível de Prioridade</span>
<span class="b" style="left:11.2px;top:278.0px;font:bold 12px 'Liberation Sans',sans-serif;line-height:16px;color:#0000ff;letter-spacing:-0.08px">Detalhamento do Serviço</span>
<span class="b" style="left:11.2px;top:341.0px;font:bold 12px 'Liberation Sans',sans-serif;line-height:16px;color:#0000ff;letter-spacing:-0.11px">Responsavél Pelo Recebimento:</span>
<span class="b" style="left:265.7px;top:341.0px;font:bold 12px 'Liberation Sans',sans-serif;line-height:16px;color:#0000ff;letter-spacing:-0.14px">Responsável Pela Impressão</span>
<span class="b" style="left:559.2px;top:341.0px;font:bold 12px 'Liberation Sans',sans-serif;line-height:16px;color:#0000ff;letter-spacing:-0.45px">Impressa Em:</span>
<span class="b" style="left:706.5px;top:341.0px;font:bold 12px 'Liberation Sans',sans-serif;line-height:16px;color:#0000ff;letter-spacing:-0.16px">Cancelada Em:</span>
<span class="b" style="left:11.2px;top:380.0px;font:bold 12px 'Liberation Sans',sans-serif;line-height:16px;color:#0000ff;letter-spacing:-0.00px">Motivo da Pendência</span>
<span class="b" style="left:264.9px;top:380.0px;font:bold 12px 'Liberation Sans',sans-serif;line-height:16px;color:#0000ff;letter-spacing:-0.03px">Responsável Pela Pendência:</span>
<span class="b" style="left:706.5px;top:380.0px;font:bold 12px 'Liberation Sans',sans-serif;line-height:16px;color:#0000ff;letter-spacing:-0.17px">Pendente Em:</span>
<span class="b" style="left:11.2px;top:419.0px;font:bold 12px 'Liberation Sans',sans-serif;line-height:16px;color:#0000ff;letter-spacing:-0.07px">Detalhamento da Pendência:</span>
<span class="b" style="left:30.4px;top:457.0px;font:bold 12px 'Liberation Sans',sans-serif;line-height:16px;color:#000;letter-spacing:-0.12px">Listar Todos Responsáveis</span>
<span class="b" style="left:14.5px;top:482.0px;font:bold 12px 'Liberation Sans',sans-serif;line-height:16px;color:#0000ff;letter-spacing:-0.19px">Entre Equipes</span>
<span class="b" style="left:111.2px;top:472.0px;font:bold 12px 'Liberation Sans',sans-serif;line-height:16px;color:#0000ff;letter-spacing:0.17px">Eq. Resp.P/Execução</span>
<span class="b" style="left:257.9px;top:470.0px;font:bold 12px 'Liberation Sans',sans-serif;line-height:16px;color:#0000ff;letter-spacing:0.04px">Responsável P/Execução</span>
<span class="b" style="left:473.5px;top:470.0px;font:bold 12px 'Liberation Sans',sans-serif;line-height:16px;color:#0000ff;letter-spacing:-0.23px">Executado Em:</span>
<span class="b" style="left:564.3px;top:470.0px;font:bold 12px 'Liberation Sans',sans-serif;line-height:16px;color:#0000ff;letter-spacing:-0.26px">Baixada Em:</span>
<span class="b" style="left:644.1px;top:470.0px;font:bold 12px 'Liberation Sans',sans-serif;line-height:16px;color:#0000ff;letter-spacing:-0.02px">Hora Inicial:</span>
<span style="left:652.5px;top:490.0px;font:12px 'Liberation Sans',sans-serif;line-height:16px;color:#000;letter-spacing:-0.34px">:</span>
<span class="b" style="left:718.5px;top:470.0px;font:bold 12px 'Liberation Sans',sans-serif;line-height:16px;color:#0000ff;letter-spacing:-0.06px">Hora Final:</span>
<span style="left:727.5px;top:490.0px;font:12px 'Liberation Sans',sans-serif;line-height:16px;color:#000;letter-spacing:-0.34px">:</span>
<span class="b" style="left:784.5px;top:470.0px;font:bold 12px 'Liberation Sans',sans-serif;line-height:16px;color:#0000ff;letter-spacing:-0.00px">Situação</span>
<span class="b" style="left:788.5px;top:490.0px;font:bold 12px 'Liberation Sans',sans-serif;line-height:16px;color:#0000ff;letter-spacing:-0.33px">RECEBIDA</span>
<span class="b" style="left:11.5px;top:511.0px;font:bold 12px 'Liberation Sans',sans-serif;line-height:16px;color:#0000ff;letter-spacing:-0.04px">Detalhamento da Execução</span>
<span class="b" style="left:564.3px;top:510.7px;font:bold 12px 'Liberation Sans',sans-serif;line-height:16px;color:#0000ff;letter-spacing:0.09px">Últ. Alteração</span>
<span class="b" style="left:660.5px;top:510.7px;font:bold 12px 'Liberation Sans',sans-serif;line-height:16px;color:#0000ff;letter-spacing:-0.04px">Responsável Pela Última Alteração</span>
<span class="b" style="left:564.3px;top:553.0px;font:bold 12px 'Liberation Sans',sans-serif;line-height:16px;color:#0000ff;letter-spacing:0.16px">Data Prevista P/ Execução</span>
<span class="b" style="left:51.0px;top:594.0px;font:12px 'Liberation Sans',sans-serif;line-height:16px;color:#838383;letter-spacing:0.34px"><u>I</u>ncluir</span>
<span class="b" style="left:148.7px;top:594.0px;font:12px 'Liberation Sans',sans-serif;line-height:16px;color:#838383;letter-spacing:0.14px"><u>A</u>lterar</span>
<span class="b" style="left:248.1px;top:594.0px;font:12px 'Liberation Sans',sans-serif;line-height:16px;color:#838383;letter-spacing:0.34px"><u>E</u>xcluir</span>
<span class="b" style="left:341.4px;top:594.0px;font:bold 12px 'Liberation Sans',sans-serif;line-height:16px;color:#0000ff;letter-spacing:-0.23px">Ca<u>n</u>celar</span>
<span class="b" style="left:446.0px;top:594.0px;font:bold 12px 'Liberation Sans',sans-serif;line-height:16px;color:#0000ff;letter-spacing:-0.09px"><u>S</u>alvar</span>
<span class="b" style="left:550.8px;top:594.0px;font:12px 'Liberation Sans',sans-serif;line-height:16px;color:#838383;letter-spacing:-0.01px"><u>S</u>air</span>
<span class="b" style="left:798.1px;top:594.0px;font:bold 12px 'Liberation Sans',sans-serif;line-height:16px;color:#0000ff;letter-spacing:-0.04px">Excluir - Período</span>
</div>
</body></html>
